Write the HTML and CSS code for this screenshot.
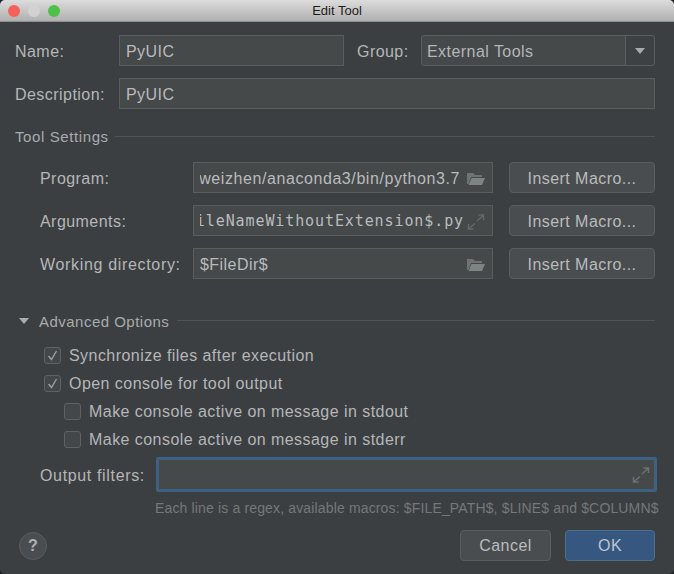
FILE: index.html
```html
<!DOCTYPE html>
<html lang="en">
<head>
<meta charset="UTF-8">
<meta name="viewport" content="width=device-width, initial-scale=1.0">
<title>Edit Tool</title>
<link rel="stylesheet" href="styles.css">
</head>
<body>
<div class="window">
    <div class="titlebar">
        <div class="lights">
            <span class="light red"></span>
            <span class="light gray"></span>
            <span class="light green"></span>
        </div>
        <div class="title">Edit Tool</div>
    </div>

    <div class="content">
        <div class="row name-row">
            <label class="top-label">Name:</label>
            <div class="field name-field">PyUIC</div>
            <label class="group-label">Group:</label>
            <div class="combo">
                <div class="combo-text">External Tools</div>
                <div class="combo-arrow"><span class="arrow-down"></span></div>
            </div>
        </div>
        <div class="row desc-row">
            <label class="top-label">Description:</label>
            <div class="field grow">PyUIC</div>
        </div>

        <div class="section tool-section">
            <span class="section-title">Tool Settings</span>
            <span class="rule"></span>
        </div>

        <div class="settings">
            <div class="row setting">
                <label class="setting-label">Program:</label>
                <div class="field path-field">
                    <span class="value clip program-path">weizhen/anaconda3/bin/python3.7</span>
                    <svg class="icon" width="20" height="16" viewBox="0 0 20 16"><path d="M1 2h6l2 2h7v2H5L2.5 13H1z" fill="#6e7375"/><path d="M5.5 7H19l-3 7H2.6z" fill="#7d8486"/></svg>
                </div>
                <button class="btn macro">Insert Macro...</button>
            </div>
            <div class="row setting">
                <label class="setting-label">Arguments:</label>
                <div class="field path-field args-field">
                    <span class="value clip mono">$FileNameWithoutExtension$.py</span>
                    <svg class="icon" width="20" height="16" viewBox="0 0 20 16" fill="none" stroke="#62676a" stroke-width="1.5"><path d="M11 7l6-5.500M12.500 1h5v5M9 9.500l-6 5M2.500 10v5h5"/></svg>
                </div>
                <button class="btn macro">Insert Macro...</button>
            </div>
            <div class="row setting">
                <label class="setting-label long-label">Working directory:</label>
                <div class="field path-field">
                    <span class="value">$FileDir$</span>
                    <svg class="icon" width="20" height="16" viewBox="0 0 20 16"><path d="M1 2h6l2 2h7v2H5L2.500 13H1z" fill="#6e7375"/><path d="M5.500 7H19l-3 7H2.600z" fill="#7d8486"/></svg>
                </div>
                <button class="btn macro">Insert Macro...</button>
            </div>
        </div>

        <div class="section advanced-section">
            <span class="arrow-down tree-arrow"></span>
            <span class="section-title">Advanced Options</span>
            <span class="rule"></span>
        </div>

        <div class="options">
            <div class="check-row">
                <span class="checkbox"><svg width="13" height="13" viewBox="0 0 13 13" fill="none" stroke="#9c9ea0" stroke-width="1.400"><path d="M2.500 7l3 3.500L10.500 2"/></svg></span>
                <span class="check-text">Synchronize files after execution</span>
            </div>
            <div class="check-row">
                <span class="checkbox"><svg width="13" height="13" viewBox="0 0 13 13" fill="none" stroke="#9c9ea0" stroke-width="1.400"><path d="M2.500 7l3 3.500L10.500 2"/></svg></span>
                <span class="check-text">Open console for tool output</span>
            </div>
            <div class="check-row nested">
                <span class="checkbox"></span>
                <span class="check-text">Make console active on message in stdout</span>
            </div>
            <div class="check-row nested">
                <span class="checkbox"></span>
                <span class="check-text">Make console active on message in stderr</span>
            </div>
        </div>

        <div class="row filters-row">
            <label class="filters-label">Output filters:</label>
            <div class="field focused">
                <svg class="icon" width="20" height="16" viewBox="0 0 20 16" fill="none" stroke="#6b7072" stroke-width="1.500"><path d="M11 7l6-5.500M12.500 1h5v5M9 9.500l-6 5M2.500 10v5h5"/></svg>
            </div>
        </div>
        <div class="hint">Each line is a regex, available macros: $FILE_PATH$, $LINE$ and $COLUMN$</div>

        <div class="footer">
            <div class="help">?</div>
            <div class="footer-buttons">
                <button class="btn cancel">Cancel</button>
                <button class="btn ok">OK</button>
            </div>
        </div>
    </div>
</div>
</body>
</html>
```

FILE: styles.css
```css
html, body {
    margin: 0;
    padding: 0;
    background-color: #1e1f20;
}

body {
    font-family: "Liberation Sans", Arial, sans-serif;
    font-size: 16px;
    letter-spacing: 0.45px;
    color: #b4b6b8;
}

.window {
    width: 674px;
    height: 574px;
    overflow: hidden;
    background-color: #3c3f41;
    border-radius: 5px;
}

.titlebar {
    display: flex;
    align-items: center;
    justify-content: center;
    position: relative;
    height: 22px;
    box-sizing: border-box;
    background: linear-gradient(#dcdcdc, #b0b0b0);
    border-bottom: 1px solid #8f8f8f;
}

.title {
    font-size: 13px;
    letter-spacing: 0;
    color: #1c1c1c;
}

.lights {
    position: absolute;
    left: 8px;
    top: 5px;
    display: flex;
    gap: 8px;
}

.light {
    width: 12px;
    height: 12px;
    border-radius: 50%;
}

.red { background-color: #f4615a; }
.gray { background-color: #d2d2d2; }
.green { background-color: #4fc04a; }

.content {
    padding: 13px 19px 0 15px;
}

.row {
    display: flex;
    align-items: center;
}

label {
    padding-top: 2px;
}

.top-label {
    width: 104px;
    flex-shrink: 0;
}

.field {
    display: flex;
    align-items: center;
    box-sizing: border-box;
    height: 31px;
    padding: 2px 6px 0;
    background-color: #45494a;
    border: 1px solid #5a5d5f;
    color: #b9bbbd;
    overflow: hidden;
    white-space: nowrap;
}

.grow { flex: 1; }

.name-field { width: 225px; }

.group-label {
    width: 64px;
    margin-left: 13px;
}

.combo {
    flex: 1;
    display: flex;
    height: 31px;
    box-sizing: border-box;
    background-color: #45494a;
    border: 1px solid #5a5d5f;
    border-radius: 3px;
}

.combo-text {
    flex: 1;
    display: flex;
    align-items: center;
    padding: 2px 0 0 5px;
    border-right: 1px solid #5a5d5f;
}

.combo-arrow {
    width: 28px;
    display: flex;
    align-items: center;
    justify-content: center;
    background-color: #3e4143;
    border-radius: 0 3px 3px 0;
}

.arrow-down {
    width: 0;
    height: 0;
    border-left: 5px solid transparent;
    border-right: 5px solid transparent;
    border-top: 6px solid #a9acae;
}

.desc-row { margin-top: 12px; }

.section {
    display: flex;
    align-items: center;
    gap: 6px;
    color: #a9abad;
}

.section-title {
    font-size: 15px;
    letter-spacing: 0.6px;
}

.rule {
    flex: 1;
    height: 1px;
    background-color: #515355;
}

.tool-section { margin-top: 18px; height: 18px; }

.settings {
    display: flex;
    flex-direction: column;
    gap: 12px;
    margin-top: 17px;
    padding-left: 25px;
}

.setting-label { width: 153px; flex-shrink: 0; }

.long-label { letter-spacing: 0.67px; }

.path-field {
    width: 300px;
    justify-content: space-between;
    gap: 6px;
}

.args-field { gap: 2px; }

.value { flex: 1; min-width: 0; }

.clip {
    display: flex;
    justify-content: flex-end;
    overflow: hidden;
}

.program-path { letter-spacing: 0.58px; }

.mono {
    padding-bottom: 2px;
    font-family: "DejaVu Sans Mono", monospace;
    font-size: 15px;
    letter-spacing: 0.9px;
}

.icon { flex-shrink: 0; }

.btn {
    box-sizing: border-box;
    height: 31px;
    padding: 2px 0 0;
    background-color: #4a4d4f;
    border: 1px solid #5a5d5f;
    border-radius: 4px;
    color: #b9bbbd;
    font-family: inherit;
    font-size: 16px;
    letter-spacing: 0.45px;
}

.macro {
    width: 146px;
    margin-left: 16px;
}

.advanced-section {
    margin-top: 32px;
    height: 18px;
    padding-left: 4px;
}

.advanced-section .section-title {
    padding-top: 2px;
    margin-right: 2px;
    letter-spacing: 0.48px;
}

.tree-arrow {
    margin-top: 2px;
    margin-right: 4px;
}

.options {
    display: flex;
    flex-direction: column;
    gap: 8px;
    margin-top: 16px;
    padding-left: 29px;
}

.check-row {
    display: flex;
    align-items: center;
    gap: 8px;
    height: 20px;
}

.check-text { padding-top: 2px; }

.nested { padding-left: 20px; }

.checkbox {
    display: flex;
    align-items: center;
    justify-content: center;
    box-sizing: border-box;
    width: 17px;
    height: 17px;
    background-color: #43474a;
    border: 1px solid #5f6264;
    border-radius: 3px;
}

.filters-row { margin-top: 8px; padding-left: 25px; margin-right: -2px; }

.filters-label {
    width: 116px;
    flex-shrink: 0;
    letter-spacing: 0.65px;
}

.focused {
    flex: 1;
    height: 35px;
    justify-content: flex-end;
    padding: 0 3px 0 0;
    border: 3px solid #3d6185;
    border-radius: 2px;
}

.hint {
    margin-top: 8px;
    margin-left: 140px;
    font-size: 14px;
    letter-spacing: 0.15px;
    color: #75787a;
    white-space: nowrap;
}

.footer {
    display: flex;
    align-items: center;
    justify-content: space-between;
    margin-top: 14px;
    padding-left: 4px;
}

.help {
    width: 28px;
    height: 28px;
    box-sizing: border-box;
    display: flex;
    align-items: center;
    justify-content: center;
    background-color: #4a4d4f;
    border: 1px solid #5a5d5f;
    border-radius: 50%;
    font-size: 16px;
    font-weight: bold;
    color: #b0b2b4;
}

.footer-buttons {
    display: flex;
    gap: 14px;
}

.footer-buttons .btn { padding-top: 0; }

.cancel { width: 91px; }

.ok {
    width: 90px;
    background-color: #365880;
    border-color: #4c708c;
    color: #bbc6d2;
}
```
